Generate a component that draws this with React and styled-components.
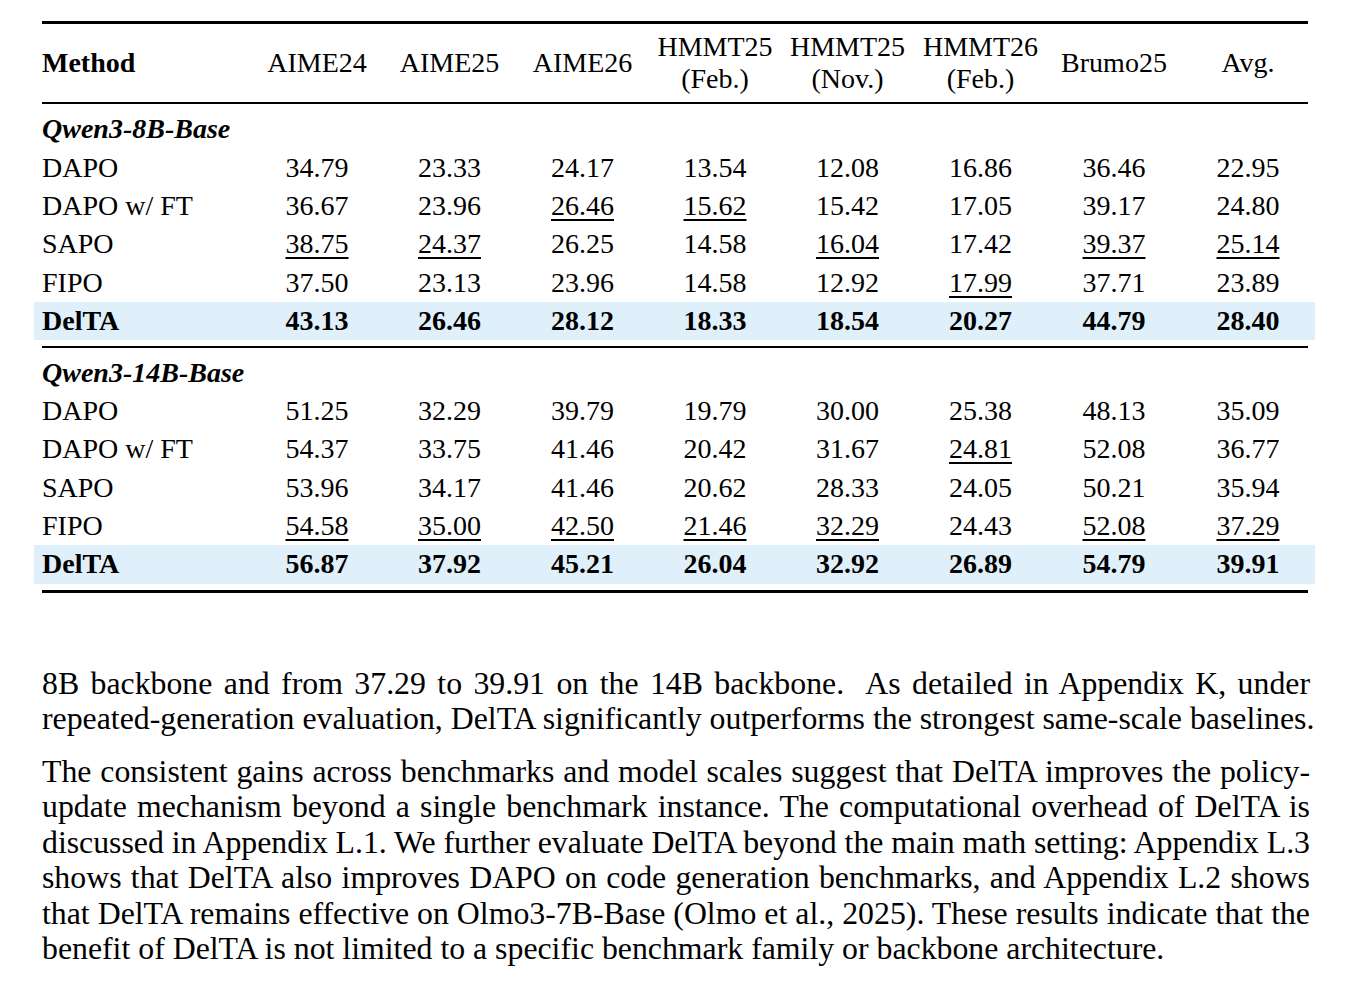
import React from "react";
import styled, { createGlobalStyle } from "styled-components";

const GlobalStyle = createGlobalStyle`
  body {
    margin: 0;
    background: #ffffff;
    color: #000000;
    font-family: "Liberation Serif", "Times New Roman", serif;
  }
`;

const Page = styled.div`
  width: 1281px;
  padding: 21px 0 40px 34px;
`;

const Table = styled.div`
  display: flex;
  flex-direction: column;
`;

const Rule = styled.div`
  height: ${(p) => (p.$heavy ? "3px" : "2px")};
  background: #000;
  margin: ${(p) => p.$space || "0"} 7px 0 8px;
`;

const COLS = "217px 132px 133px 133px 132px 133px 133px 134px 134px";

const HeadRow = styled.div`
  display: grid;
  grid-template-columns: ${COLS};
  align-items: center;
  height: 78px;
  font-size: 28px;
  line-height: 32px;
`;

const HeadCell = styled.div`
  text-align: ${(p) => (p.$left ? "left" : "center")};
  padding-left: ${(p) => (p.$left ? "8px" : "0")};
  font-weight: ${(p) => (p.$bold ? 700 : 400)};
`;

const Row = styled.div`
  display: grid;
  grid-template-columns: ${COLS};
  align-items: center;
  height: 38.4px;
  margin-top: ${(p) => p.$top || "0"};
  font-size: 28px;
  line-height: 32px;
  background: ${(p) => (p.$highlight ? "#dff0fa" : "transparent")};
  font-weight: ${(p) => (p.$highlight ? 700 : 400)};
`;

const GroupLabel = styled.div`
  grid-column: 1 / -1;
  padding-left: 8px;
  font-weight: 700;
  font-style: italic;
`;

const NameCell = styled.div`
  padding-left: 8px;
  white-space: nowrap;
`;

const Cell = styled.div`
  text-align: center;
  span {
    text-decoration: ${(p) => (p.$under ? "underline" : "none")};
    text-decoration-thickness: 1.5px;
    text-underline-offset: 4px;
  }
`;

const Text = styled.div`
  width: 1268px;
  margin: 73px 0 0 8px;
  font-size: 31.8px;
  line-height: 35.4px;
`;

const Para = styled.p`
  margin: 0 0 ${(p) => p.$gap || "0"};
`;

const Line = styled.span`
  display: block;
  text-align: justify;
  text-align-last: ${(p) => (p.$last ? "left" : "justify")};
  white-space: nowrap;
  word-spacing: ${(p) => (p.$tight ? "-1px" : "normal")};
`;

const headers = [
  ["AIME24"],
  ["AIME25"],
  ["AIME26"],
  ["HMMT25", "(Feb.)"],
  ["HMMT25", "(Nov.)"],
  ["HMMT26", "(Feb.)"],
  ["Brumo25"],
  ["Avg."],
];

// "_" prefix marks a second-best (underlined) value
const groups = [
  {
    label: "Qwen3-8B-Base",
    rows: [
      ["DAPO", "34.79", "23.33", "24.17", "13.54", "12.08", "16.86", "36.46", "22.95"],
      ["DAPO w/ FT", "36.67", "23.96", "_26.46", "_15.62", "15.42", "17.05", "39.17", "24.80"],
      ["SAPO", "_38.75", "_24.37", "26.25", "14.58", "_16.04", "17.42", "_39.37", "_25.14"],
      ["FIPO", "37.50", "23.13", "23.96", "14.58", "12.92", "_17.99", "37.71", "23.89"],
      ["DelTA", "43.13", "26.46", "28.12", "18.33", "18.54", "20.27", "44.79", "28.40"],
    ],
  },
  {
    label: "Qwen3-14B-Base",
    rows: [
      ["DAPO", "51.25", "32.29", "39.79", "19.79", "30.00", "25.38", "48.13", "35.09"],
      ["DAPO w/ FT", "54.37", "33.75", "41.46", "20.42", "31.67", "_24.81", "52.08", "36.77"],
      ["SAPO", "53.96", "34.17", "41.46", "20.62", "28.33", "24.05", "50.21", "35.94"],
      ["FIPO", "_54.58", "_35.00", "_42.50", "_21.46", "_32.29", "24.43", "_52.08", "_37.29"],
      ["DelTA", "56.87", "37.92", "45.21", "26.04", "32.92", "26.89", "54.79", "39.91"],
    ],
  },
];

const para1 = [
  "8B backbone and from 37.29 to 39.91 on the 14B backbone.\u00a0 As detailed in Appendix K, under",
  "repeated-generation evaluation, DelTA significantly outperforms the strongest same-scale baselines.",
];

const para2 = [
  "The consistent gains across benchmarks and model scales suggest that DelTA improves the policy-",
  "update mechanism beyond a single benchmark instance. The computational overhead of DelTA is",
  "discussed in Appendix L.1. We further evaluate DelTA beyond the main math setting: Appendix L.3",
  "shows that DelTA also improves DAPO on code generation benchmarks, and Appendix L.2 shows",
  "that DelTA remains effective on Olmo3-7B-Base (Olmo et al., 2025). These results indicate that the",
  "benefit of DelTA is not limited to a specific benchmark family or backbone architecture.",
];

const Group = ({ label, rows, first }) => (
  <>
    <Row $top={first ? "6px" : "5px"}>
      <GroupLabel>{label}</GroupLabel>
    </Row>
    {rows.map(([name, ...vals]) => (
      <Row key={name} $highlight={name === "DelTA"}>
        <NameCell>{name}</NameCell>
        {vals.map((v, i) => {
          const under = v.startsWith("_");
          return (
            <Cell key={i} $under={under}>
              <span>{under ? v.slice(1) : v}</span>
            </Cell>
          );
        })}
      </Row>
    ))}
  </>
);

const App = () => {
  return (
    <Page>
      <GlobalStyle />
      <Table>
        <Rule $heavy />
        <HeadRow>
          <HeadCell $left $bold>Method</HeadCell>
          {headers.map((h, i) => (
            <HeadCell key={i}>
              {h.map((line, j) => (
                <div key={j}>{line}</div>
              ))}
            </HeadCell>
          ))}
        </HeadRow>
        <Rule />
        <Group {...groups[0]} first />
        <Rule $space="6px" />
        <Group {...groups[1]} />
        <Rule $heavy $space="6px" />
      </Table>
      <Text>
        <Para $gap="17.5px">
          {para1.map((l, i) => (
            <Line key={i} $last={i === para1.length - 1}>{l}</Line>
          ))}
        </Para>
        <Para>
          {para2.map((l, i) => (
            <Line key={i} $last={i === para2.length - 1} $tight={i === 2}>{l}</Line>
          ))}
        </Para>
      </Text>
    </Page>
  );
};

export default App;
